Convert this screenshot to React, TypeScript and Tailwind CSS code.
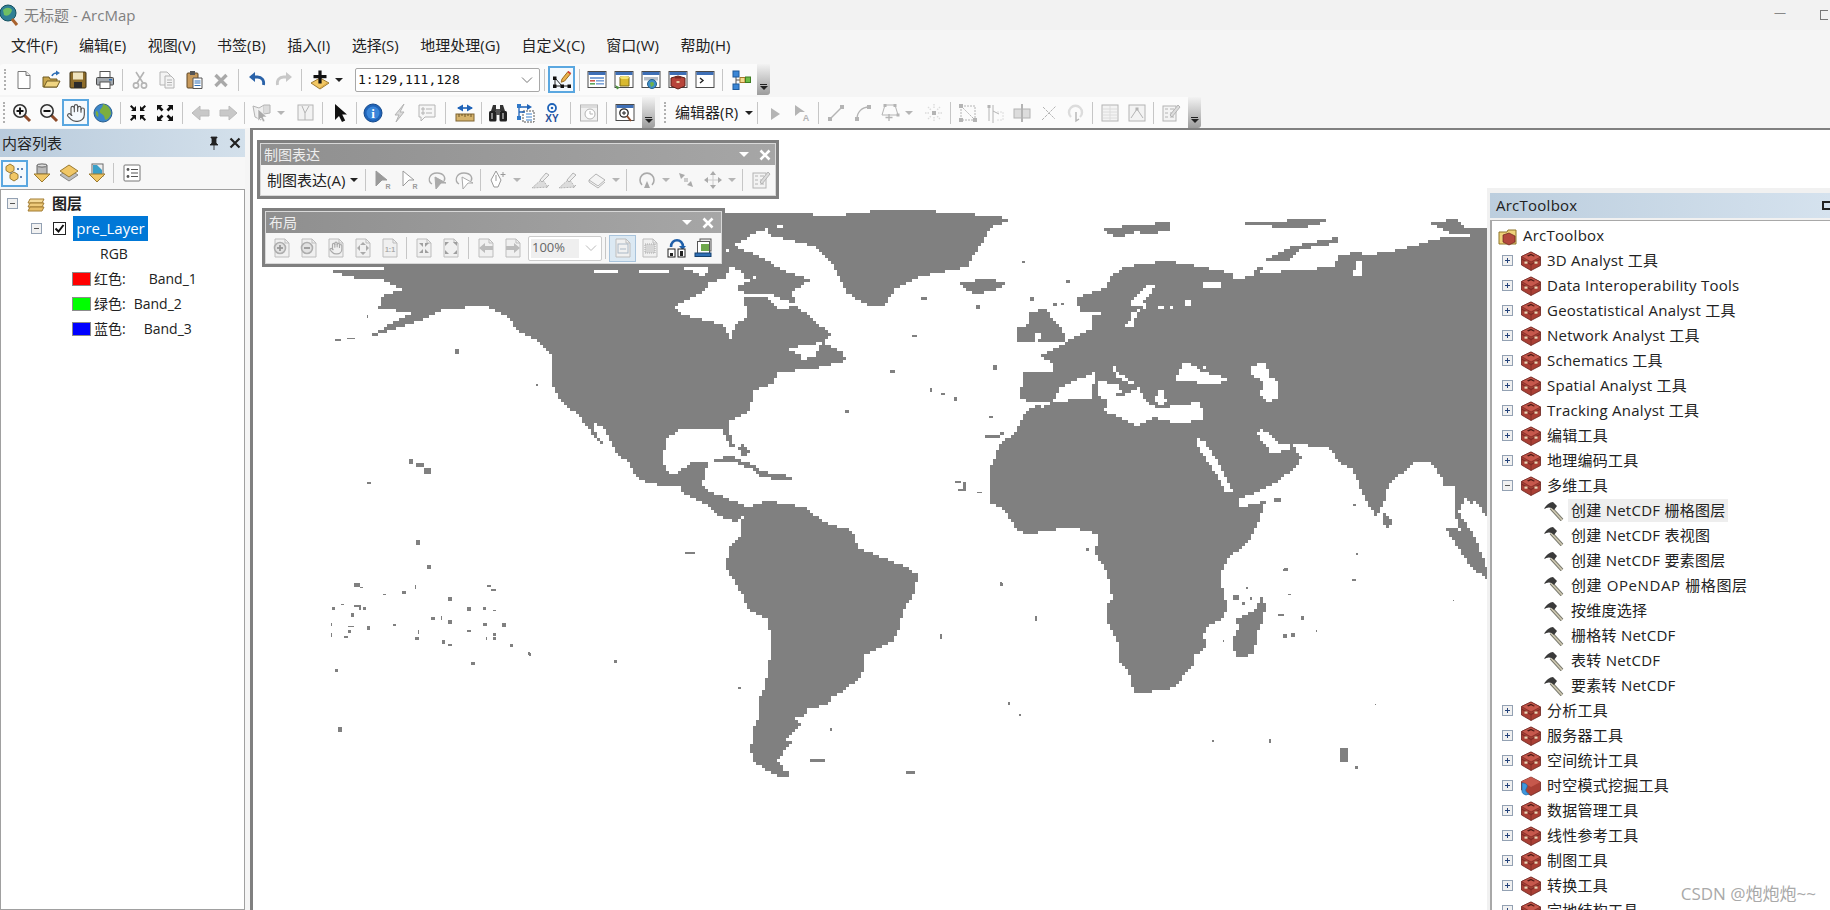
import type { ReactNode } from "react";
import { Hand } from "lucide-react";

// ---------- map drawing: outlines traced from the picture, snapped to the raster grid ----------
type Scale = { ox: number; oy: number; fx: number; fy: number };
const Z7: Scale = { ox: 250, oy: 200, fx: 1 / 2.529, fy: 1 / 3 };
const Z8: Scale = { ox: 870, oy: 200, fx: 1 / 2.529, fy: 1 / 3 };
const Z10: Scale = { ox: 1100, oy: 560, fx: 1 / 3, fy: 1 / 3 };
const Z11: Scale = { ox: 720, oy: 590, fx: 1 / 3, fy: 1 / 3 };
const Z12: Scale = { ox: 320, oy: 580, fx: 1 / 3, fy: 1 / 3 };
const PAGE: Scale = { ox: 0, oy: 0, fx: 1, fy: 1 };

const parse = (s: string, z: Scale) =>
  s.trim().split(/\s+/).map((p) => {
    const [x, y] = p.split(",").map(Number);
    return [z.ox + x * z.fx, z.oy + y * z.fy];
  });

// polygon -> staircase path, gives the raster look of the layer
const stair = (pts: number[][], g = 3) => {
  const s = pts.map(([x, y]) => [Math.round(x / g), Math.round(y / g)]);
  let d = `M${s[0][0] * g} ${s[0][1] * g}`;
  for (let i = 0; i < s.length; i++) {
    const a = s[i];
    const b = s[(i + 1) % s.length];
    const n = Math.max(Math.abs(b[0] - a[0]), Math.abs(b[1] - a[1]));
    for (let k = 1; k <= n; k++) {
      const x = Math.round(a[0] + ((b[0] - a[0]) * k) / n);
      const y = Math.round(a[1] + ((b[1] - a[1]) * k) / n);
      d += `H${x * g}V${y * g}`;
    }
  }
  return d + "Z";
};

const LAND: [string, Scale][] = [
  // north america
  ["195,212 270,240 335,240 385,270 340,280 335,310 325,325 415,340 350,385 305,405 335,395 420,365 480,325 600,322 640,345 680,395 720,420 765,470 765,560 790,610 830,650 850,680 880,720 950,790 965,820 1000,845 1050,855 1085,860 1100,885 1150,910 1180,950 1225,965 1262,925 1150,870 1140,850 1155,790 1120,785 1085,820 1060,820 1042,780 1050,710 1080,690 1190,690 1215,745 1225,745 1213,690 1215,660 1265,630 1275,570 1320,550 1335,520 1420,510 1505,480 1500,450 1450,430 1470,400 1385,320 1370,270 1420,235 1350,210 1300,170 1225,135 1200,165 1200,195 345,195 340,210", Z7],
  // arctic islands
  ["1200,195 1200,40 1300,35 1400,42 1440,50 1568,40 1568,315 1510,270 1480,190 1430,135 1300,100 1310,88 1375,78 1350,72 1290,90 1225,135 1200,160", Z7],
  // greenland
  ["0,30 100,28 230,40 365,58 300,80 290,130 260,175 250,200 135,230 65,260 40,320 0,320", Z8],
  ["228,245 290,238 340,250 335,268 270,280 235,268", Z8],
  ["588,80 760,70 755,90 700,100 680,95 640,115 600,100", Z8],
  ["1005,175 1070,135 1185,110 1185,125 1090,150 1060,185 1010,185", Z8],
  ["945,65 1150,60 1150,68 1090,80 945,72", Z8],
  ["1415,70 1480,60 1500,85 1568,85 1568,100 1470,100", Z8],
  // eurasia + africa north
  ["525,290 590,265 610,225 640,200 740,182 800,190 910,220 915,240 960,232 975,205 1000,205 990,220 1165,205 1180,165 1230,155 1260,165 1340,145 1450,115 1568,105 1568,960 1510,895 1490,940 1530,1020 1560,1120 1540,1090 1500,1020 1480,940 1480,855 1450,855 1450,830 1415,785 1380,790 1310,860 1300,920 1280,950 1250,890 1225,800 1190,790 1160,745 1060,735 1095,780 1070,815 1020,855 925,900 935,920 1005,905 990,960 960,1020 900,1080 885,1110 890,1200 615,1200 600,1110 570,1060 575,1000 525,985 500,980 400,1000 370,985 340,930 305,900 300,800 325,730 370,690 385,640 425,610 380,600 385,520 460,520 465,490 430,460 490,430 530,400 565,385 565,345 590,340 530,340", Z8],
  ["1460,980 1480,985 1530,1050 1568,1130 1568,1150 1520,1090", Z8],
  ["370,385 400,370 400,340 440,330 470,370 495,405 490,430 420,430 370,425", Z8],
  ["1297,935 1315,945 1320,975 1305,985 1297,960", Z8],
  // africa south
  ["0,0 25,30 40,70 40,120 25,135 18,190 40,225 55,260 58,310 75,320 90,360 90,385 105,397 190,392 230,375 255,340 280,310 282,285 310,275 315,245 305,220 325,195 370,175 378,130 370,100 360,70 362,30 385,0 375,-20 30,-20", Z10],
  ["480,112 495,140 490,185 470,230 458,280 430,288 410,280 402,255 402,230 415,205 408,175 440,160 460,150", Z10],
  // south america
  ["748,508 764,502 804,508 823,523 851,532 859,550 870,553 882,558 906,567 917,577 915,592 740,592 726,567 730,547 742,533 740,520", PAGE],
  ["60,0 85,60 145,95 155,160 150,190 140,240 135,300 118,330 118,380 100,420 100,450 90,480 100,520 150,555 190,565 205,548 235,550 200,542 175,505 210,465 215,450 195,445 225,415 240,395 225,385 260,375 265,358 320,345 330,320 345,315 410,260 428,230 428,195 470,170 515,155 535,125 548,60 555,35 585,0 585,-10 60,-10", Z11],
  ["273,507 310,507 315,515 298,520 273,520", Z11],
  ["555,542 580,542 583,553 570,548", Z11],
];

const SEAS: [string, Scale][] = [
  // hudson bay, james bay
  ["1075,320 1110,290 1150,275 1160,250 1200,240 1215,205 1250,215 1250,235 1285,225 1230,260 1250,280 1310,285 1370,305 1380,290 1385,320 1340,330 1310,295 1250,290 1255,350 1225,375 1220,420 1200,375 1100,345", Z7],
  ["1365,445 1450,430 1430,470 1385,480 1390,460", Z7],
  ["280,270 320,270 320,280 280,280", Z7],
  ["870,670 890,690 930,770 910,760 870,690", Z7],
  // thin gaps on the arctic coast
  ["870,208 930,210 930,218 870,216", Z7],
  ["985,212 1060,208 1060,218 985,220", Z7],
  ["1100,198 1165,205 1150,225 1110,210", Z7],
  // baltic, mediterranean, seas
  ["660,300 700,255 730,255 690,310 700,325 675,340 670,380 625,385 650,370 660,340 690,320 660,315", Z8],
  ["425,608 465,605 480,565 530,530 572,515 565,595 540,595 470,610 430,620", Z8],
  ["578,542 620,550 635,575 610,585 640,590 675,565 700,610 730,625 838,610 840,660 780,672 720,650 680,675 640,655 590,630 600,600 575,590", Z8],
  ["612,497 625,515 670,550 665,555 620,525 612,510", Z8],
  ["720,595 730,570 745,565 745,600 755,610 725,615", Z8],
  ["790,490 805,490 825,505 865,490 860,495 835,520 905,535 905,545 870,550 790,540 770,540", Z8],
  ["965,500 1020,482 1000,500 1010,530 1035,545 1030,600 1010,605 985,580 995,540 965,520", Z8],
  ["985,690 1000,700 1030,735 1055,730 1060,750 1020,755 995,725 978,700", Z8],
  ["830,715 840,720 875,780 915,880 905,875 870,810 830,730", Z8],
  ["840,250 885,250 885,262 850,265 840,265", Z8],
  ["1228,180 1242,180 1242,230 1225,232", Z8],
  ["730,320 742,320 742,326 730,326", Z8],
  ["755,318 770,318 770,326 755,326", Z8],
  ["797,303 812,303 812,315 797,315", Z8],
  ["420,395 440,395 425,430 418,425", Z8],
  ["1525,900 1560,960 1568,1040 1520,960", Z8],
];

// islands that sit on top of the seas
const ISLES: [string, Scale][] = [
  ["1175,780 1210,770 1290,800 1290,810 1230,790 1180,790", Z7],
  ["1280,815 1380,830 1360,838 1285,832", Z7],
  ["1240,730 1262,760 1250,765 1235,745", Z7],
];

// small islands, x y w h in zoomed picture units
const DOTS: [number, number, number, number, Scale][] = [
  ...([
    [103,10,16,12],[120,22,10,3],[190,42,8,3],[246,34,12,7],[284,15,4,12],[385,52,12,12],[502,15,11,7],[514,26,14,8],[36,82,8,8],[62,71,9,3],[103,75,20,6],[118,80,4,10],[130,82,8,8],[93,100,8,12],[32,130,4,8],[85,138,16,4],[85,150,8,8],[141,138,8,12],[220,131,8,8],[333,112,12,8],[363,108,4,12],[385,120,12,12],[441,82,12,12],[490,82,8,8],[520,90,8,3],[490,130,12,8],[546,130,12,12],[441,150,12,7],[520,160,8,8],[520,172,8,8],[498,172,4,8],[570,191,8,8],[625,217,4,8],[452,247,8,8],[285,172,12,8],[366,180,8,12],[385,191,12,8],[44,266,8,8],[32,160,4,10],[73,168,10,5],[294,150,4,12],
  ] as number[][]).map(([x, y, w, h]) => [x, y, w, h, Z12] as [number, number, number, number, Scale]),
  ...([
    [518,447,10,14],[723,552,6,6],[296,845,10,8],[402,778,10,14],[420,790,20,10],[440,805,18,16],[265,1150,14,12],[385,1172,8,8],[447,1095,12,12],[421,1020,8,14],[600,1155,10,6],[610,1166,12,8],[500,1190,8,8],[1505,630,10,10],[1100,1055,25,6],[215,416,14,6],[245,413,20,3],[296,345,3,8],
  ] as number[][]).map(([x, y, w, h]) => [x, y, w, h, Z7] as [number, number, number, number, Scale]),
  ...([
    [130,290,14,10],[268,316,10,10],[105,405,14,7],[310,495,10,14],[50,510,12,10],[495,240,10,10],[385,182,8,8],[405,290,10,12],[462,310,10,8],[482,308,8,6],[152,565,6,12],[180,580,10,6],[212,590,8,14],[300,648,12,6],[290,705,40,10],[330,695,10,10],[215,842,14,8],[235,845,8,24],[222,866,20,6],[270,875,14,5],[545,1045,10,8],[328,1145,6,6],[1048,1105,10,8],[1228,1060,5,5],[1222,912,6,6],[1225,1138,4,6],[1022,895,18,10],
  ] as number[][]).map(([x, y, w, h]) => [x, y, w, h, Z8] as [number, number, number, number, Scale]),
  ...([
    [550,27,12,7],[757,57,5,6],[400,105,18,14],[425,125,9,10],[449,112,8,8],[535,162,16,6],[603,168,8,12],[550,222,12,12],[573,218,12,12],[647,210,5,7],[1058,120,4,4],[824,432,4,3],[368,240,5,5],[438,82,6,4],[565,102,8,3],
  ] as number[][]).map(([x, y, w, h]) => [x, y, w, h, Z10] as [number, number, number, number, Scale]),
  ...([
    [1000,583,3,3],[1035,616,2,5],[940,634,2,5],[1008,702,2,3],[1019,714,2,2],[830,728,2,3],[1269,739,2,4],[1340,748,8,14],[1355,766,3,3],[1212,740,2,2],[338,727,4,5],[335,669,3,3],[472,662,3,3],[614,660,3,3],[529,653,2,3],[738,687,3,2],[510,644,3,3],
  ] as number[][]).map(([x, y, w, h]) => [x, y, w, h, PAGE] as [number, number, number, number, Scale]),
];

function WorldMap() {
  return (
    <svg viewBox="253 130 1577 780" className="block h-full w-full" shapeRendering="crispEdges">
      {LAND.map(([s, z], i) => (
        <path key={i} fill="#808080" d={stair(parse(s, z))} />
      ))}
      {SEAS.map(([s, z], i) => (
        <path key={i} fill="#fff" d={stair(parse(s, z))} />
      ))}
      {ISLES.map(([s, z], i) => (
        <path key={i} fill="#808080" d={stair(parse(s, z))} />
      ))}
      {DOTS.map(([x, y, w, h, z], i) => (
        <rect key={i} x={z.ox + x * z.fx} y={z.oy + y * z.fy} width={w * z.fx} height={h * z.fy} fill="#808080" />
      ))}
    </svg>
  );
}

// ---------- icons ----------
const S = ({ children, size = 20 }: { children: ReactNode; size?: number }) => (
  <svg width={size} height={size} viewBox="0 0 20 20" fill="none" className="shrink-0">
    {children}
  </svg>
);
const G1 = "#b4b4b4";
const G2 = "#dcdcdc";

const NewDoc = () => <S><path d="M4 1.5h8l4 4v13H4z" fill="#fff" stroke="#777" /><path d="M12 1.5v4h4" fill="#e8e8e8" stroke="#777" /></S>;
const OpenFile = () => <S><path d="M2 7h6l1 2h7v8H2z" fill="#c9a64c" stroke="#6f5a22" /><path d="M3 17l3-6h13l-3 6z" fill="#f0d582" stroke="#6f5a22" /><path d="M11 6c1-3 3-3 5-3" stroke="#2f6fb5" strokeWidth="1.6" /><path d="M15 0.5l4 2.5-4 2.5z" fill="#2f6fb5" /></S>;
const Save = () => <S><rect x="2" y="2" width="16" height="16" rx="1" fill="#8d6c2b" stroke="#3d3114" /><rect x="5" y="2.5" width="10" height="7" fill="#efe3bd" /><rect x="6" y="12" width="8" height="6" fill="#2c2c2c" /></S>;
const Print = () => <S><rect x="5" y="1.5" width="10" height="7" fill="#fff" stroke="#555" /><rect x="1.5" y="7.5" width="17" height="7.5" rx="1" fill="#a3a8ad" stroke="#4a4a4a" /><rect x="5" y="12" width="10" height="6.5" fill="#fff" stroke="#555" /><rect x="14" y="9" width="3" height="1.5" fill="#2f6fb5" /></S>;
const Cut = () => <S><path d="M6 2l7 11M14 2L7 13" stroke={G1} strokeWidth="1.6" /><circle cx="6" cy="15.5" r="2.6" stroke={G1} strokeWidth="1.6" /><circle cx="14" cy="15.5" r="2.6" stroke={G1} strokeWidth="1.6" /></S>;
const Copy = () => <S><path d="M3 2h7l3 3v10H3z" fill="#f4f4f4" stroke={G1} /><path d="M8 6h6l3 3v9H8z" fill="#f4f4f4" stroke={G1} /><path d="M10 10h5M10 12.5h5M10 15h5" stroke={G1} /></S>;
const Paste = () => <S><rect x="3" y="3" width="11" height="15" rx="1" fill="#c89a5c" stroke="#5e4726" /><rect x="6" y="1" width="5" height="4" fill="#555" /><path d="M9 8h9v10.5H9z" fill="#fff" stroke="#555" /><path d="M10.5 11h6M10.5 13h6M10.5 15.5h6" stroke="#2f6fb5" strokeWidth="1.2" /></S>;
const Del = () => <S><path d="M4.5 5l11 11M15.5 5l-11 11" stroke="#a9a9a9" strokeWidth="3.4" /></S>;
const Undo = () => <S><path d="M16.5 15c1-5-2-8-6-8H7" stroke="#2a62a8" strokeWidth="2.8" /><path d="M8 2v10L2 7z" fill="#2a62a8" /></S>;
const Redo = () => <svg width="20" height="20" viewBox="0 0 20 20" className="-scale-x-100"><path d="M16.5 15c1-5-2-8-6-8H7" stroke="#c8c8c8" strokeWidth="2.8" fill="none" /><path d="M8 2v10L2 7z" fill="#c8c8c8" /></svg>;
const AddData = () => <S><path d="M10 8l9 5-9 6-9-6z" fill="#f2c763" stroke="#9c7a33" /><path d="M10 18l7-5" stroke="#d9a743" /><rect x="8.4" y="0.5" width="3.2" height="13" fill="#111" /><rect x="3.5" y="5" width="13" height="3.2" fill="#111" /></S>;
const EditTool = () => <S><path d="M3 8l7 8M3 16h14M3 8v8" stroke="#222" /><rect x="1" y="6.5" width="3.5" height="3.5" fill="#111" /><rect x="1" y="14.5" width="3.5" height="3.5" fill="#111" /><rect x="8.5" y="14.5" width="3.5" height="3.5" fill="#111" /><rect x="15.5" y="14.5" width="3.5" height="3.5" fill="#111" /><path d="M10 9l6-7.5 2.6 2.2L12.6 11l-3.4 1.2z" fill="#e9b14d" stroke="#9a6b1d" /><path d="M16 1.5l2.6 2.2" stroke="#d33" strokeWidth="1.6" /></S>;
const Win = ({ children }: { children?: ReactNode }) => <S><rect x="1" y="1.5" width="18" height="16" fill="#fff" stroke="#4b4b4b" /><rect x="1.5" y="2" width="17" height="3" fill="#3e6fb6" />{children}</S>;
const WinToc = () => <Win><rect x="3" y="7" width="14" height="2" fill="#7fa4d8" /><rect x="3" y="10" width="5" height="1.6" fill="#d25b4c" /><rect x="9" y="10" width="8" height="1.6" fill="#7fa4d8" /><rect x="3" y="13" width="5" height="1.6" fill="#5da75b" /><rect x="9" y="13" width="8" height="1.6" fill="#7fa4d8" /></Win>;
const WinCat = () => <Win><path d="M6 7h9v9H6z" fill="#d9b92f" stroke="#7c6a16" /><ellipse cx="10.5" cy="7.5" rx="4.5" ry="1.5" fill="#f4e36e" /><path d="M1 15l5 2.5-3 2z" fill="#4f8f3f" /></Win>;
const WinSearch = () => <Win><rect x="3" y="7" width="14" height="3.5" fill="#b8bfc8" /><circle cx="11" cy="14" r="4.5" fill="#3f8fc8" stroke="#24608c" /><path d="M9 13c2-2 4-1 4 1s-2 2-3 3z" fill="#6eb24a" /></Win>;
const WinBox = () => <Win><path d="M3 8l7-2 7 2v8l-7 3-7-3z" fill="#b7443a" stroke="#5c1f19" /><path d="M7 6.5h6v2H7z" fill="#7a2a24" /><rect x="8.5" y="11" width="3" height="2" fill="#e7c9a0" /></Win>;
const WinPy = () => <Win><path d="M5 8l3 2.5-3 2.5" stroke="#222" strokeWidth="1.4" /></Win>;
const Model = () => <S><path d="M5 4v12M5 10h7M12 10h3" stroke="#555" /><rect x="2" y="1" width="6" height="6" fill="#3a86d6" stroke="#1e5a9c" /><rect x="2" y="14" width="6" height="5.5" fill="#3a86d6" stroke="#1e5a9c" /><rect x="9" y="7.5" width="5" height="5" fill="#f5d98e" stroke="#a5782a" /><rect x="14.5" y="7" width="5" height="5.5" fill="#6cbd45" stroke="#3f7d22" /></S>;

const Zoom = ({ plus }: { plus?: boolean }) => <S><path d="M12.5 12.5l5.5 5.5" stroke="#8c4a2a" strokeWidth="3" /><circle cx="8" cy="8" r="6.2" fill="#f6f6f6" stroke="#333" strokeWidth="1.6" /><path d="M4.5 8h7" stroke="#111" strokeWidth="2" />{plus && <path d="M8 4.5v7" stroke="#111" strokeWidth="2" />}</S>;
const Globe = () => <S><circle cx="10" cy="10" r="9" fill="#3c86c9" stroke="#2a5f8e" /><path d="M10 1c5 1 8 5 8 10-2 4-3 5-5 6-2-1-1-4-3-5-2-2-4-2-3-5 1-2 3-3 3-6z" fill="#7cae3e" /><path d="M3 8c2 0 3 3 2 6-2-1-3-3-2-6z" fill="#7cae3e" /></S>;
const Four = ({ inward }: { inward?: boolean }) => (
  <S>
    {inward ? (
      <path fill="#111" d="M8 8H3l1.8-1.8L2 3.4 3.4 2l2.8 2.8L8 3zM12 8V3l1.8 1.8L16.6 2 18 3.4l-2.8 2.8L17 8zM8 12v5l-1.8-1.8L3.4 18 2 16.6l2.8-2.8L3 12zM12 12h5l-1.8 1.8 2.8 2.8-1.4 1.4-2.8-2.8L12 17z" />
    ) : (
      <path fill="#111" d="M2 2h5.5L5.7 3.8 8.5 6.6 6.6 8.5 3.8 5.7 2 7.5zM18 2v5.5l-1.8-1.8-2.8 2.8-1.9-1.9 2.8-2.8L12.5 2zM2 18v-5.5l1.8 1.8 2.8-2.8 1.9 1.9-2.8 2.8L7.5 18zM18 18h-5.5l1.8-1.8-2.8-2.8 1.9-1.9 2.8 2.8 1.8-1.8z" />
    )}
  </S>
);
const Back = () => <S><path d="M1 10l8-7v4h9v6H9v4z" fill="#c8c8c8" stroke="#bbb" /></S>;
const Forward = () => <S><path d="M19 10l-8-7v4H2v6h9v4z" fill="#c8c8c8" stroke="#bbb" /></S>;
const SelFeat = () => <S><path d="M1 3l6 2 5-3v9l-3 6-6-3z" fill="#eee" stroke={G1} /><path d="M12 2h6v8l-6 1" stroke={G1} fill={G2} /><path d="M6 6v12l3-3 2 4 2-1-2-4h4z" fill="#aaa" stroke="#fff" strokeWidth="0.6" /></S>;
const ClearSel = () => <S><rect x="2" y="2" width="15" height="15" fill="#f2f2f2" stroke={G1} /><path d="M6 3l3 7 4-7M9 10v7" stroke={G1} /></S>;
const Pointer = () => <S><path d="M5 1v16l4-4 3 6 3.2-1.5-3-6H17z" fill="#111" /></S>;
const Info = () => <S><circle cx="10" cy="10" r="9" fill="#1f63b8" stroke="#144a8c" /><circle cx="10" cy="10" r="6.5" fill="#3a86d9" /><text x="10" y="15" textAnchor="middle" fontSize="13" fontWeight="700" fill="#fff" fontFamily="Liberation Serif, serif">i</text></S>;
const Flash = () => <S><path d="M14 1L5 12h4l-3 7 8-10h-4z" fill={G2} stroke={G1} /></S>;
const Popup = () => <S><path d="M2 2h16v12H8l-4 4v-4H2z" fill="#f6f6f6" stroke={G1} /><path d="M5 5h2v2H5zM5 9h2v2H5zM9 6h6M9 10h6" stroke={G1} /></S>;
const Measure = () => <S><rect x="1" y="11" width="18" height="7" fill="#d6b36c" stroke="#7f6533" /><path d="M4 11v3M7 11v2M10 11v3M13 11v2M16 11v3" stroke="#6a5427" /><path d="M3 5h14" stroke="#1f63b8" strokeWidth="1.6" /><path d="M8 1.5v7L2 5zM12 1.5v7L18 5z" fill="#1f63b8" /></S>;
const Binoc = () => <S><path d="M3 8l2-6h3v6zM17 8l-2-6h-3v6z" fill="#333" /><rect x="1" y="8" width="7.5" height="10.5" rx="1.5" fill="#222" /><rect x="11.5" y="8" width="7.5" height="10.5" rx="1.5" fill="#222" /><rect x="8" y="6" width="4" height="6" fill="#555" /><rect x="3" y="10" width="2" height="6" fill="#888" /><rect x="14" y="10" width="2" height="6" fill="#888" /></S>;
const FindRoute = () => <S><rect x="8" y="8" width="11" height="11" fill="#fff" stroke="#555" strokeDasharray="2 1" /><path d="M11 11h6M11 14h6M11 17h6" stroke="#3a7fc8" /><path d="M4 3v13M4 9h6M6 4h7" stroke="#1f63b8" strokeWidth="1.3" /><rect x="2" y="1" width="4" height="4" fill="#2f78c8" /><rect x="2" y="13" width="4" height="4" fill="#2f78c8" /><path d="M12 1l5 3-5 3z" fill="#1f63b8" /></S>;
const XY = () => <S><circle cx="10" cy="5" r="4" fill="#fff" stroke="#1f63b8" strokeWidth="1.8" /><circle cx="10" cy="5" r="1.3" fill="#1f63b8" /><text x="10" y="19" textAnchor="middle" fontSize="10" fontWeight="700" fill="#1f4f99" fontFamily="Liberation Sans, sans-serif">XY</text></S>;
const Clock = () => <S><rect x="1.5" y="2" width="17" height="16" fill="#f1f1f1" stroke={G1} /><rect x="2" y="2.5" width="16" height="2.5" fill={G2} /><circle cx="11" cy="11" r="5" fill="#fff" stroke={G1} /><path d="M11 8v3h3" stroke={G1} /></S>;
const MagWin = () => <Win><circle cx="9" cy="10" r="4.2" fill="#fff" stroke="#222" strokeWidth="1.3" /><path d="M7 10h4M9 8v4" stroke="#222" /><path d="M12 13l4 5" stroke="#8c4a2a" strokeWidth="2" /></Win>;

// disabled editor glyphs
const Play = () => <S><path d="M6 5l9 6-9 6z" fill={G1} /></S>;
const PlayA = () => <S><path d="M3 2l10 7H8l-5 4z" fill={G1} /><text x="14" y="18" textAnchor="middle" fontSize="9" fontWeight="700" fill={G1} fontFamily="Liberation Sans, sans-serif">A</text></S>;
const LineSeg = () => <S><path d="M4 16L16 4" stroke={G1} strokeWidth="1.4" /><rect x="2" y="14" width="4" height="4" fill={G1} /><rect x="14" y="2" width="4" height="4" fill={G1} /></S>;
const CurveSeg = () => <S><path d="M4 16c0-7 5-12 12-12" stroke={G1} strokeWidth="1.4" /><rect x="2" y="14" width="4" height="4" fill={G1} /><rect x="14" y="2" width="4" height="4" fill={G1} /></S>;
const PolyPt = () => <S><path d="M5 2h10l3 10H2z" stroke={G1} /><rect x="3.5" y="1" width="3" height="3" fill={G1} /><rect x="13.5" y="1" width="3" height="3" fill={G1} /><rect x="16.5" y="10.5" width="3" height="3" fill={G1} /><path d="M9 11v7M5.5 14.5h7" stroke={G1} strokeWidth="1.3" /></S>;
const Burst = () => <S><rect x="8" y="8" width="4" height="4" fill={G1} /><path d="M10 1v5M10 14v5M1 10h5M14 10h5M4 4l3 3M16 4l-3 3M4 16l3-3M16 16l-3-3" stroke={G2} strokeWidth="1.4" strokeDasharray="1.5 1" /></S>;
const Edit1 = () => <S><path d="M3 3l14 14M3 3v14h14M3 3h14v14" stroke={G1} strokeDasharray="2 1" /><rect x="1" y="1" width="4" height="4" fill={G1} /><rect x="15" y="15" width="4" height="4" fill={G1} /><rect x="1" y="15" width="4" height="4" fill={G1} /></S>;
const Edit2 = () => <S><path d="M4 2v16M8 2v18M8 8l6 3" stroke={G1} /><rect x="2.5" y="2" width="3" height="3" fill={G1} /><path d="M12 9h6v8h-6" stroke={G2} strokeDasharray="2 1" /></S>;
const Edit3 = () => <S><rect x="2" y="6" width="16" height="9" fill={G2} stroke={G1} /><path d="M10 1v18" stroke={G1} strokeWidth="2" /></S>;
const Edit4 = () => <S><path d="M3 17L17 3M4 4l12 12" stroke={G1} strokeDasharray="3 1" /></S>;
const Edit5 = () => <S><path d="M5 14a6.5 6.5 0 1 1 9 0" stroke={G2} strokeWidth="2.4" /><path d="M10 9v9l3-2" stroke={G1} strokeWidth="1.4" /></S>;
const TableG = () => <S><rect x="2" y="2" width="16" height="16" fill="#f3f3f3" stroke={G1} /><path d="M3 6h14M3 9h14M3 12h14M3 15h14M10 3v14" stroke={G2} /></S>;
const Vert = () => <S><rect x="2" y="2" width="16" height="16" fill="#f3f3f3" stroke={G1} /><path d="M4 15l6-9 6 9" stroke={G1} /><rect x="8.5" y="4.5" width="3" height="3" fill={G1} /></S>;
const Sketch = () => <S><rect x="2" y="3" width="13" height="15" fill="#f3f3f3" stroke={G1} /><path d="M4 6h3M4 10h3M4 14h3M9 6h4M9 10h4M9 14h4" stroke={G1} /><path d="M9 12l8-10 2 2-8 10z" fill={G2} stroke={G1} /></S>;

// cartography + layout toolbar glyphs
const ArrowR = ({ outline }: { outline?: boolean }) => <S><path d="M3 1l11 9H9l-6 6z" fill={outline ? "#fff" : "#9a9a9a"} stroke="#9a9a9a" /><text x="15" y="19" textAnchor="middle" fontSize="7" fontWeight="700" fill="#9a9a9a" fontFamily="Liberation Sans, sans-serif">R</text></S>;
const Lasso = ({ outline }: { outline?: boolean }) => <S><path d="M5 14C0 11 2 3 10 3c7 0 9 5 7 8" stroke="#aaa" strokeWidth="1.3" /><path d="M8 7l11 6h-5l-5 6z" fill={outline ? "#fff" : "#aaa"} stroke="#aaa" /></S>;
const Pen = () => <S><path d="M8 1l5 9-3 7H6L3 10z" fill="#fff" stroke="#999" /><path d="M8 5v6" stroke="#999" /><path d="M15 2v5M12.5 4.5h5" stroke="#999" /></S>;
const Brush = () => <S><path d="M2 18l10-9 6 8z" fill={G2} stroke={G1} strokeDasharray="2 1" /><path d="M10 10l6-7 3 2-7 7z" fill="#eee" stroke={G1} /><path d="M16 18l3-3" stroke={G1} /></S>;
const Eraser = () => <S><path d="M2 10l7-6 9 6-7 6z" fill="#f4f4f4" stroke={G1} /><path d="M2 10v2l9 6 7-6" stroke={G1} /></S>;
const Rot = () => <S><path d="M5 15a7 7 0 1 1 10 0" stroke="#aaa" strokeWidth="1.6" /><path d="M10 11l3 7-6 0z" fill="#aaa" /></S>;
const Resize = () => <S><path d="M3 3l6 2-4 4zM17 17l-6-2 4-4z" fill="#aaa" /><rect x="8" y="8" width="4" height="4" fill="#ccc" /></S>;
const MoveA = () => <S><path d="M10 1l3 4H7zM10 19l3-4H7zM1 10l4-3v6zM19 10l-4-3v6z" fill="#aaa" /><path d="M10 5v10M5 10h10" stroke="#ccc" /></S>;
const Page = ({ children }: { children?: ReactNode }) => <S><path d="M3 1h10l4 4v14H3z" fill="#f0f0f0" stroke="#bdbdbd" /><path d="M13 1v4h4" stroke="#bdbdbd" />{children}</S>;
const PageZoom = ({ plus }: { plus?: boolean }) => <Page><circle cx="8" cy="10" r="5.5" fill="#e2e2e2" stroke="#aeaeae" strokeWidth="1.6" /><path d="M5 10h6" stroke="#999" strokeWidth="1.8" />{plus && <path d="M8 7v6" stroke="#999" strokeWidth="1.8" />}</Page>;
const PageHand = () => <Page><Hand x={3} y={3} width={14} height={14} stroke="#aaa" strokeWidth={2} /></Page>;
const PageFit = () => <Page><path d="M10 4l3 3H7zM10 17l3-3H7zM4 10l3-3v6zM16 10l-3-3v6z" fill="#aaa" /></Page>;
const Page11 = () => <Page><text x="10" y="14" textAnchor="middle" fontSize="7" fontWeight="700" fill="#aaa" fontFamily="Liberation Sans, sans-serif">1:1</text></Page>;
const PageFour = ({ inward }: { inward?: boolean }) => <Page><path d={inward ? "M5 5h4v4zM15 5h-4v4zM5 15h4v-4zM15 15h-4v-4z" : "M4 4h4L4 8zM16 4h-4l4 4zM4 16h4l-4-4zM16 16h-4l4-4z"} fill="#9f9f9f" /></Page>;
const PageArrow = ({ right }: { right?: boolean }) => <Page><path d={right ? "M17 10l-6-5v3H3v4h8v3z" : "M3 10l6-5v3h8v4H9v3z"} fill="#bcbcbc" /></Page>;
const PageSel = () => <Page><rect x="5" y="6" width="10" height="9" stroke="#aab8c6" /><path d="M7 11h6" stroke="#aab8c6" /></Page>;
const PageDots = () => <Page><rect x="5" y="6" width="10" height="9" fill="#d6d6d6" stroke="#aaa" strokeDasharray="1 1" /></Page>;
const Switch = () => <S><path d="M4 9c0-9 12-9 12 0" stroke="#1f5fa8" strokeWidth="2.6" /><path d="M12 8h7l-3.5 4z" fill="#1f5fa8" /><rect x="1" y="11" width="7" height="8" fill="#fff" stroke="#222" /><rect x="11" y="11" width="7" height="8" fill="#fff" stroke="#222" /><rect x="3" y="15" width="3" height="3" fill="#222" /><rect x="13" y="13" width="3" height="5" fill="#222" /></S>;
const Pages = () => <S><rect x="6" y="1" width="11" height="12" fill="#eee" stroke="#555" /><rect x="3.5" y="3.5" width="12" height="12" fill="#fff" stroke="#555" /><rect x="7" y="6" width="8" height="7" fill="#6fa84c" /><rect x="1" y="15" width="16" height="3.5" fill="#2f6fb5" stroke="#14406e" /></S>;

// table of contents + tree glyphs
const TabOrder = () => <S><path d="M5 1l4 2.5v4L5 10 1 7.5v-4z" fill="#f1c766" stroke="#9a7a31" /><path d="M9 9l4 2.5v4L9 18l-4-2.5v-4z" fill="#f1c766" stroke="#9a7a31" /><path d="M6 9v2" stroke="#777" /><path d="M12 6h2M16 6h2M15 14h2" stroke="#2f5f9e" strokeWidth="1.6" /></S>;
const TabSource = () => <S><path d="M5 2h10v9H5z" fill="#b9b9b9" stroke="#666" /><ellipse cx="10" cy="2.5" rx="5" ry="1.6" fill="#ddd" stroke="#666" /><path d="M2 11h16l-8 8z" fill="#f1c766" stroke="#9a7a31" /></S>;
const TabVis = () => <S><path d="M10 6l9 6-9 6-9-6z" fill="#bdbdbd" stroke="#888" /><path d="M10 2l9 6-9 6-9-6z" fill="#f1c766" stroke="#9a7a31" /></S>;
const TabSel = () => <S><rect x="5" y="1" width="11" height="12" fill="#fff" stroke="#666" /><path d="M6 2h9v10H6z" fill="#3a9fc8" /><path d="M10 2l5 5v-5z" fill="#eee" /><path d="M2 11h16l-8 8z" fill="#f1c766" stroke="#9a7a31" /></S>;
const TabOpt = () => <S><rect x="2" y="2" width="16" height="16" rx="1" fill="#fff" stroke="#777" /><circle cx="6" cy="6.5" r="1.4" fill="#555" /><circle cx="6" cy="13.5" r="1.4" fill="#555" /><path d="M9 6.5h7M9 13.5h7M9 10h7" stroke="#555" /></S>;
const Layers = () => <S><path d="M4 5h14l-2 4H2z" fill="#f4d996" stroke="#a27c33" /><path d="M4 9h14l-2 4H2z" fill="#efcb7b" stroke="#a27c33" /><path d="M4 13h14l-2 4H2z" fill="#e6bd68" stroke="#a27c33" /></S>;
const RedBox = () => <S><path d="M0.5 5.5L10 1l9.5 5v8.5L10 19.5 0.5 14z" fill="#a93f35" stroke="#6a241e" strokeWidth="0.8" /><path d="M0.5 8l9.5 5.5L19.5 8" stroke="#7c2d26" strokeWidth="1.2" /><path d="M10 13.5v6" stroke="#7c2d26" strokeWidth="0.8" /><path d="M0.5 5.5L10 1l9.5 5L10 11z" fill="#c6584c" stroke="#6a241e" strokeWidth="0.6" /><path d="M6 4.5l4-1.8 4 2.2-1.3.7-2.7-1.4-2.7 1.2z" fill="#4f1a15" /><rect x="3.5" y="10.5" width="3" height="2.2" fill="#ecd7b8" /><rect x="13.5" y="10.5" width="3" height="2.2" fill="#ecd7b8" /></S>;
const BlueBox = () => <S><path d="M0.5 5.5L10 1l9.5 5v8.5L10 19.5 0.5 14z" fill="#a93f35" stroke="#6a241e" strokeWidth="0.8" /><path d="M0.5 5.5L10 1l9.5 5L10 11z" fill="#c6584c" /><path d="M1 7c4 0 7 2 4 6-1 2 1 4 3 5l-3 1c-3-1-4-2-4-4z" fill="#3f97dd" stroke="#1d6bab" strokeWidth="0.7" /></S>;
const RootBox = () => <S><path d="M1 6h8l1-2h8v14H1z" fill="#efd27a" stroke="#8e7528" /><path d="M5 9l6-2 6 3v6l-6 3-6-3z" fill="#b3483d" stroke="#69251f" strokeWidth="0.7" /></S>;
const Hammer = () => <S><path d="M7 7l11 12" stroke="#77776c" strokeWidth="3.6" /><path d="M7 7l11 12" stroke="#cfc9b2" strokeWidth="1.8" /><path d="M0 8c2-4 6-7 9-7l4 4-3 4-2.5-2C5 6 2.5 6.5 0 8z" fill="#3a3a3a" /></S>;

const Box = ({ open }: { open?: boolean }) => (
  <div className="relative h-[11px] w-[11px] shrink-0 border border-[#93a1b3] bg-[#f1f1f1]">
    <div className={`absolute left-[2px] top-[4px] h-px w-[5px] ${open ? "bg-[#555]" : "bg-[#24427a]"}`} />
    {!open && <div className="absolute left-[4px] top-[2px] h-[5px] w-px bg-[#24427a]" />}
  </div>
);

// ---------- toolbar parts ----------
const Btn = ({ children, on }: { children: ReactNode; on?: boolean }) => (
  <div className={`flex h-[27px] w-[27px] shrink-0 items-center justify-center ${on ? "border-2 border-[#5aa7e0] bg-[#f4f9fd]" : ""}`}>{children}</div>
);
const Sep = ({ w }: { w: string }) => (
  <div className={`flex h-full shrink-0 items-center justify-center ${w}`}>
    <div className="h-[22px] w-px bg-[#c6c6c6]" />
  </div>
);
const Caret = ({ w = "w-[12px]", dark = true }: { w?: string; dark?: boolean }) => (
  <div className={`flex shrink-0 items-center justify-center ${w}`}>
    <div className={`h-0 w-0 border-x-[4px] border-t-[4px] border-x-transparent ${dark ? "border-t-[#222]" : "border-t-[#b5b5b5]"}`} />
  </div>
);
const Grip = ({ w = "w-[10px]" }: { w?: string }) => (
  <div className={`flex h-full shrink-0 justify-center py-[5px] ${w}`}>
    <div className="h-full w-[2px] border-l-2 border-dotted border-[#b0b0b0]" />
  </div>
);
const EndGrip = () => (
  <div className="flex h-full w-[13px] shrink-0 flex-col items-center justify-end rounded-br-[3px] bg-gradient-to-b from-[#f3f3f3] to-[#9d9d9d] pb-[5px]">
    <div className="mb-px h-px w-[7px] bg-[#222]" />
    <div className="h-0 w-0 border-x-[4px] border-t-[4px] border-x-transparent border-t-[#222]" />
  </div>
);

const MENU = ["文件(F)", "编辑(E)", "视图(V)", "书签(B)", "插入(I)", "选择(S)", "地理处理(G)", "自定义(C)", "窗口(W)", "帮助(H)"];

const TOOLS: { label: string; open?: boolean; icon?: ReactNode; hover?: boolean; child?: boolean; wide?: boolean }[] = [
  { label: "3D Analyst 工具" },
  { label: "Data Interoperability Tools" },
  { label: "Geostatistical Analyst 工具" },
  { label: "Network Analyst 工具" },
  { label: "Schematics 工具" },
  { label: "Spatial Analyst 工具" },
  { label: "Tracking Analyst 工具" },
  { label: "编辑工具" },
  { label: "地理编码工具" },
  { label: "多维工具", open: true },
  { label: "创建 NetCDF 栅格图层", child: true, hover: true },
  { label: "创建 NetCDF 表视图", child: true },
  { label: "创建 NetCDF 要素图层", child: true },
  { label: "创建 OPeNDAP 栅格图层", child: true, wide: true },
  { label: "按维度选择", child: true },
  { label: "栅格转 NetCDF", child: true },
  { label: "表转 NetCDF", child: true },
  { label: "要素转 NetCDF", child: true },
  { label: "分析工具" },
  { label: "服务器工具" },
  { label: "空间统计工具" },
  { label: "时空模式挖掘工具", icon: <BlueBox /> },
  { label: "数据管理工具" },
  { label: "线性参考工具" },
  { label: "制图工具" },
  { label: "转换工具" },
  { label: "宗地结构工具" },
];

function FloatBar({ title, children, className, titlePad }: { title: string; children: ReactNode; className: string; titlePad: string }) {
  return (
    <div className={`absolute border-[3px] border-[#7f7f7f] ${className}`}>
      <div className="border border-[#d8d8d8]">
        <div className={`flex h-[21px] items-center bg-gradient-to-r from-[#8f8f8f] to-[#a6a6a6] pl-[3px] text-[14px] text-[#eeeeee] ${titlePad}`}>
          <span>{title}</span>
          <div className="ml-auto mr-[10px] h-0 w-0 border-x-[5px] border-t-[5px] border-x-transparent border-t-white" />
          <svg width="12" height="12" viewBox="0 0 12 12"><path d="M1.5 1.5l9 9M10.5 1.5l-9 9" stroke="#fff" strokeWidth="2.6" /></svg>
        </div>
        <div className="flex h-[30px] items-center bg-[#f7f7f7]">{children}</div>
      </div>
    </div>
  );
}

export default function App() {
  return (
    <div className="relative flex h-[910px] w-[1830px] flex-col overflow-hidden bg-[#f5f5f5] font-['Open_Sans','Noto_Sans_CJK_SC',sans-serif] text-[14px] text-[#222]">
      {/* title bar */}
      <div className="flex h-[30px] shrink-0 items-center bg-[#f2f2f2] text-[#808080]">
        <svg width="20" height="24" viewBox="0 0 20 24" className="ml-[-1px]">
          <circle cx="9" cy="10" r="8" fill="#2f7f96" stroke="#14505f" />
          <path d="M4 7c3-3 7-3 9 0-1 4-4 7-8 5z" fill="#6fbf63" />
          <path d="M13 16l5 6" stroke="#a8612c" strokeWidth="3" />
        </svg>
        <span className="ml-[5px] text-[15px]">无标题 - ArcMap</span>
        <span className="ml-auto mr-[34px] text-[12px] leading-none text-[#888]">一</span>
        <div className="mr-[2px] h-[10px] w-[8px] border border-[#777] border-r-0" />
      </div>

      {/* menu */}
      <div className="flex h-[34px] shrink-0 items-center gap-[21.5px] pb-[3px] pl-[11px] text-[15px]">
        {MENU.map((m) => (
          <span key={m}>{m}</span>
        ))}
      </div>

      {/* standard toolbar */}
      <div className="flex h-[31px] w-[770px] shrink-0 items-center rounded-tl-[3px] bg-[#fbfbfb]">
        <Grip />
        <Btn><NewDoc /></Btn>
        <Btn><OpenFile /></Btn>
        <Btn><Save /></Btn>
        <Btn><Print /></Btn>
        <Sep w="w-[8px]" />
        <Btn><Cut /></Btn>
        <Btn><Copy /></Btn>
        <Btn><Paste /></Btn>
        <Btn><Del /></Btn>
        <Sep w="w-[9px]" />
        <Btn><Undo /></Btn>
        <Btn><Redo /></Btn>
        <Sep w="w-[9px]" />
        <Btn><AddData /></Btn>
        <Caret />
        <div className="ml-[10px] flex h-[24px] w-[185px] shrink-0 items-center justify-between rounded-[2px] border border-[#a8a8a8] bg-white pl-[2px] pr-[6px] font-['DejaVu_Sans_Mono',monospace] text-[13px] text-[#111]">
          <span>1:129,111,128</span>
          <svg width="12" height="8" viewBox="0 0 12 8"><path d="M1 1.5l5 5 5-5" stroke="#777" fill="none" /></svg>
        </div>
        <Sep w="w-[8px]" />
        <Btn on><EditTool /></Btn>
        <Sep w="w-[8px]" />
        <Btn><WinToc /></Btn>
        <Btn><WinCat /></Btn>
        <Btn><WinSearch /></Btn>
        <Btn><WinBox /></Btn>
        <Btn><WinPy /></Btn>
        <Sep w="w-[9px]" />
        <Btn><Model /></Btn>
        <div className="ml-auto h-full"><EndGrip /></div>
      </div>

      {/* tools + editor toolbars */}
      <div className="mt-[2px] flex h-[31px] shrink-0 items-center">
        <div className="flex h-full w-[655px] shrink-0 items-center bg-[#fbfbfb]">
          <Grip w="w-[8px]" />
          <Btn><Zoom plus /></Btn>
          <Btn><Zoom /></Btn>
          <Btn on><Hand size={20} strokeWidth={1.4} color="#555" /></Btn>
          <Btn><Globe /></Btn>
          <Sep w="w-[8px]" />
          <Btn><Four inward /></Btn>
          <Btn><Four /></Btn>
          <Sep w="w-[9px]" />
          <Btn><Back /></Btn>
          <Btn><Forward /></Btn>
          <Sep w="w-[7px]" />
          <Btn><SelFeat /></Btn>
          <Caret dark={false} />
          <div className="w-[5px]" />
          <Btn><ClearSel /></Btn>
          <Sep w="w-[7px]" />
          <Btn><Pointer /></Btn>
          <Sep w="w-[6px]" />
          <Btn><Info /></Btn>
          <Btn><Flash /></Btn>
          <Btn><Popup /></Btn>
          <Sep w="w-[11px]" />
          <Btn><Measure /></Btn>
          <Sep w="w-[6px]" />
          <Btn><Binoc /></Btn>
          <Btn><FindRoute /></Btn>
          <Btn><XY /></Btn>
          <Sep w="w-[10px]" />
          <Btn><Clock /></Btn>
          <Sep w="w-[9px]" />
          <Btn><MagWin /></Btn>
          <div className="ml-auto h-full"><EndGrip /></div>
        </div>
        <div className="ml-[5px] flex h-full w-[541px] shrink-0 items-center bg-[#fbfbfb]">
          <Grip />
          <span className="ml-[5px] w-[68px] shrink-0 whitespace-nowrap text-[15px]">编辑器(R)</span>
          <Caret w="w-[11px]" />
          <Sep w="w-[7px]" />
          <Btn><Play /></Btn>
          <Btn><PlayA /></Btn>
          <Sep w="w-[7px]" />
          <Btn><LineSeg /></Btn>
          <Btn><CurveSeg /></Btn>
          <Btn><PolyPt /></Btn>
          <Caret dark={false} />
          <div className="w-[5px]" />
          <Btn><Burst /></Btn>
          <Sep w="w-[7px]" />
          <Btn><Edit1 /></Btn>
          <Btn><Edit2 /></Btn>
          <Btn><Edit3 /></Btn>
          <Btn><Edit4 /></Btn>
          <Btn><Edit5 /></Btn>
          <Sep w="w-[7px]" />
          <Btn><TableG /></Btn>
          <Btn><Vert /></Btn>
          <Sep w="w-[7px]" />
          <Btn><Sketch /></Btn>
          <div className="ml-auto h-full"><EndGrip /></div>
        </div>
      </div>

      {/* workspace */}
      <div className="flex min-h-0 flex-1">
        {/* table of contents */}
        <div className="flex w-[245px] shrink-0 flex-col pt-px">
          <div className="flex h-[28px] shrink-0 items-center bg-gradient-to-r from-[#b9cbdc] to-[#d3e0eb] pl-[2px] pr-[3px] text-[15px]">
            <span>内容列表</span>
            <svg width="14" height="14" viewBox="0 0 14 14" className="ml-auto mr-[8px]"><path d="M4 1h6v1H9v5l2 2H3l2-2V2H4zM7 9v5" fill="#222" stroke="#222" strokeWidth="0.8" /></svg>
            <svg width="12" height="12" viewBox="0 0 12 12" className="mr-[1px]"><path d="M1.5 1.5l9 9M10.5 1.5l-9 9" stroke="#222" strokeWidth="2.2" /></svg>
          </div>
          <div className="flex h-[32px] shrink-0 items-center bg-[#f7f7f7] pl-px">
            <Btn on><TabOrder /></Btn>
            <div className="ml-[4px]"><TabSource /></div>
            <div className="ml-[7px]"><TabVis /></div>
            <div className="ml-[8px]"><TabSel /></div>
            <div className="ml-[6px] h-[20px] w-px bg-[#c6c6c6]" />
            <div className="ml-[8px]"><TabOpt /></div>
          </div>
          <div className="flex-1 border border-[#a0a0a0] bg-white pt-px">
            <div className="flex h-[25px] items-center pl-[6px]">
              <Box open />
              <div className="ml-[8px]"><Layers /></div>
              <span className="ml-[6px] text-[15px] font-bold">图层</span>
            </div>
            <div className="flex h-[25px] items-center pl-[30px]">
              <Box open />
              <div className="ml-[11px] flex h-[13px] w-[13px] shrink-0 items-center justify-center border border-[#222] bg-white">
                <svg width="11" height="11" viewBox="0 0 11 11"><path d="M1.5 5.5l3 3 5-6.5" stroke="#111" strokeWidth="2" fill="none" /></svg>
              </div>
              <span className="ml-[7px] flex h-[25px] w-[75px] items-center justify-center bg-[#0078d7] text-[15px] text-white">pre_Layer</span>
            </div>
            <div className="flex h-[25px] items-center pl-[99px] text-[14px]">RGB</div>
            {[
              ["#ff0000", "红色:", "Band_1", "ml-[23px]"],
              ["#00ff00", "绿色:", "Band_2", "ml-[8px]"],
              ["#0000ff", "蓝色:", "Band_3", "ml-[18px]"],
            ].map(([c, a, b, m]) => (
              <div key={a} className="flex h-[25px] items-center pl-[71px]">
                <div className="h-[14px] w-[19px] border border-[#8c8c8c]" style={{ backgroundColor: c }} />
                <span className="ml-[3px]">{a}</span>
                <span className={m}>{b}</span>
              </div>
            ))}
          </div>
        </div>
        <div className="w-[5px] shrink-0" />

        {/* map */}
        <div className="relative min-w-0 flex-1 border-l-[3px] border-t-[2px] border-[#808080] bg-white">
          <WorldMap />

          <FloatBar title="制图表达" titlePad="pr-[4px]" className="left-[4px] top-[10px] w-[522px]">
            <span className="ml-[6px] w-[80px] shrink-0 whitespace-nowrap text-[15px]">制图表达(A)</span>
            <Caret w="w-[14px]" />
            <Sep w="w-[8px]" />
            <Btn><ArrowR /></Btn>
            <Btn><ArrowR outline /></Btn>
            <Btn><Lasso /></Btn>
            <Btn><Lasso outline /></Btn>
            <Sep w="w-[7px]" />
            <Btn><Pen /></Btn>
            <Caret dark={false} />
            <div className="w-[3px] shrink-0" />
            <Btn><Brush /></Btn>
            <Btn><Brush /></Btn>
            <div className="w-[3px] shrink-0" />
            <Btn><Eraser /></Btn>
            <Caret dark={false} />
            <Sep w="w-[8px]" />
            <div className="w-[3px] shrink-0" />
            <Btn><Rot /></Btn>
            <Caret dark={false} />
            <Btn><Resize /></Btn>
            <Btn><MoveA /></Btn>
            <Caret dark={false} />
            <Sep w="w-[9px]" />
            <Btn><Sketch /></Btn>
          </FloatBar>

          <FloatBar title="布局" titlePad="pr-[7px]" className="left-[9px] top-[78px] w-[463px]">
            <div className="w-[2px] shrink-0" />
            <Btn><PageZoom plus /></Btn>
            <Btn><PageZoom /></Btn>
            <Btn><PageHand /></Btn>
            <Btn><PageFit /></Btn>
            <Btn><Page11 /></Btn>
            <Sep w="w-[7px]" />
            <Btn><PageFour inward /></Btn>
            <Btn><PageFour /></Btn>
            <Sep w="w-[8px]" />
            <Btn><PageArrow /></Btn>
            <Btn><PageArrow right /></Btn>
            <div className="ml-[2px] flex h-[25px] w-[74px] shrink-0 items-center rounded-[2px] border border-[#ccc] bg-white pl-[2px] text-[13px] text-[#666]">
              <span className="flex h-[19px] w-[48px] items-center bg-[#efefef] pl-[1px]">100%</span>
              <svg width="12" height="8" viewBox="0 0 12 8" className="ml-[6px]"><path d="M1 1.5l5 5 5-5" stroke="#bbb" fill="none" /></svg>
            </div>
            <Sep w="w-[7px]" />
            <div className="flex h-[27px] w-[27px] shrink-0 items-center justify-center border border-[#a9c4dc] bg-[#dce9f3]"><PageSel /></div>
            <Btn><PageDots /></Btn>
            <Btn><Switch /></Btn>
            <Btn><Pages /></Btn>
          </FloatBar>

          {/* docked toolbox window */}
          <div className="absolute bottom-0 left-[1234px] right-0 top-[58px] flex flex-col bg-[#f1f1f1] pl-[3px] pt-[5px]">
            <div className="flex h-[25px] shrink-0 items-center bg-gradient-to-r from-[#bccede] to-[#d5e2ee] pl-[6px] text-[15px] text-[#222]">
              <span className="tracking-[0.25px]">ArcToolbox</span>
              <div className="ml-auto h-[9px] w-[8px] border-2 border-r-0 border-[#222]" />
            </div>
            <div className="mt-[2px] min-h-0 flex-1 overflow-hidden border-l-2 border-t border-[#a8a8a8] bg-white pt-[2px] text-[15px] leading-none tracking-[0.25px]">
              <div className="flex h-[25px] items-center pl-[6px]">
                <RootBox />
                <span className="ml-[5px]">ArcToolbox</span>
              </div>
              {TOOLS.map((t) =>
                t.child ? (
                  <div key={t.label} className="flex h-[25px] items-center whitespace-nowrap pl-[52px]">
                    <Hammer />
                    <span className={`ml-[4px] flex h-[23px] items-center px-[3px] ${t.hover ? "bg-[#eeeeee]" : ""} ${t.wide ? "tracking-[0.6px]" : ""}`}>{t.label}</span>
                  </div>
                ) : (
                  <div key={t.label} className="flex h-[25px] items-center whitespace-nowrap pl-[10px]">
                    <Box open={t.open} />
                    <div className="ml-[8px]">{t.icon ?? <RedBox />}</div>
                    <span className="ml-[6px]">{t.label}</span>
                  </div>
                ),
              )}
            </div>
          </div>

          {/* watermark */}
          <span className="absolute bottom-[8px] right-[14px] text-[17px] leading-none text-[#a9a9a9]">CSDN @炮炮炮~~</span>
        </div>
      </div>
    </div>
  );
}
